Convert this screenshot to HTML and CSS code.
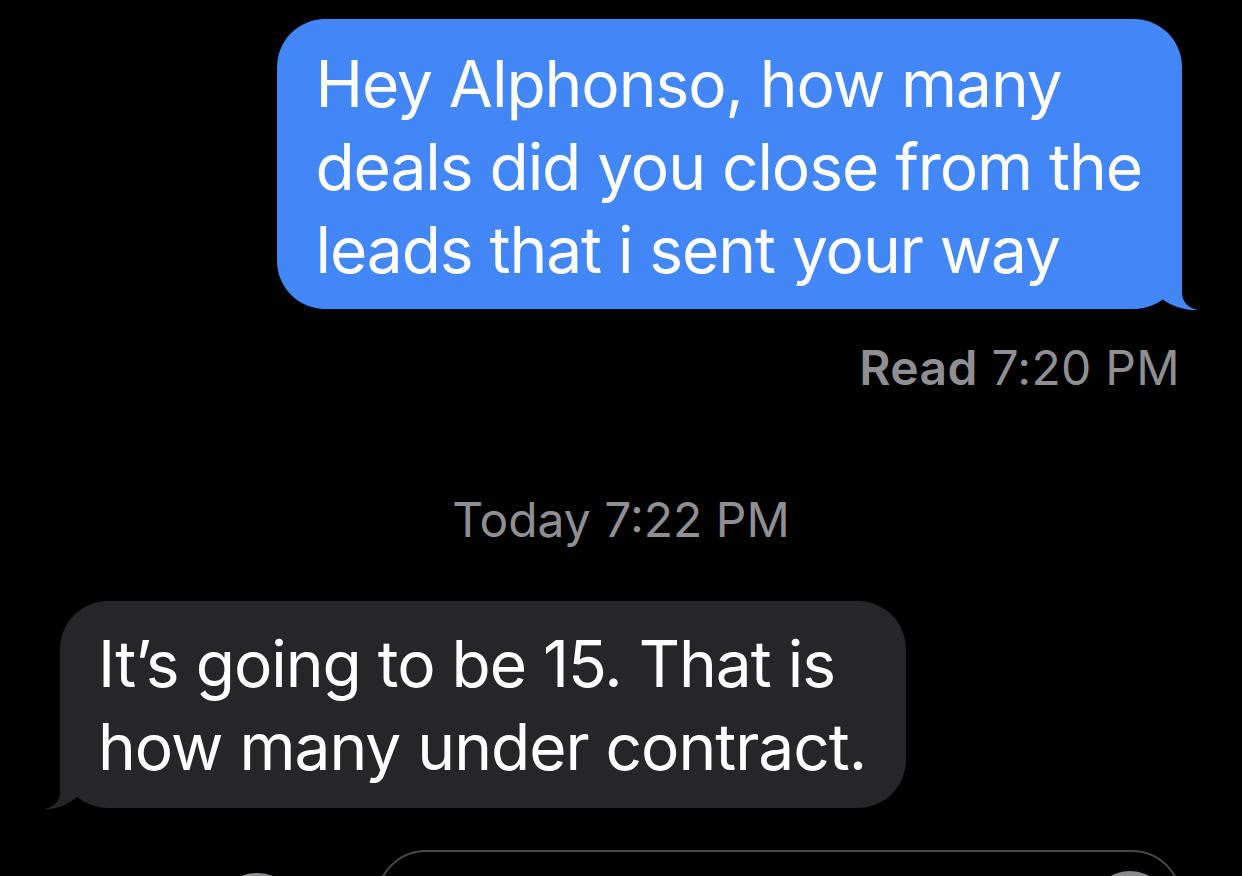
FILE: index.html
```html
<!DOCTYPE html>
<html lang="en">
<head>
<meta charset="utf-8">
<title>Messages</title>
<link rel="stylesheet" href="styles.css">
</head>
<body>
<main class="thread">
  <div class="bubble bubble-sent">Hey Alphonso, how many<br>deals did you close from the<br>leads that i sent your way<svg class="tail tail-sent" width="40" height="50" viewBox="0 0 40 50"><path d="M0,0 H24 V32 C24,42 30,48 40,50 C30,51 14,47 4,39 L0,41 Z"/></svg></div>
  <div class="receipt"><b>Read</b> 7:20 PM</div>
  <div class="stamp">Today 7:22 PM</div>
  <div class="bubble bubble-recv">It’s going to be 15. That is<br>how many under contract.<svg class="tail tail-recv" width="36" height="50" viewBox="0 0 36 50"><path d="M36,0 H16 V32 C16,42 11,48 0,50 C9,51 22,47 33,38 L36,40 Z"/></svg></div>
  <div class="composer">
    <div class="apps-button"></div>
    <div class="field">
      <div class="mic-button"></div>
    </div>
  </div>
</main>
</body>
</html>
```

FILE: styles.css
```css
html, body {
  margin: 0;
  padding: 0;
  background: #000;
  height: 876px;
  overflow: hidden;
}

body {
  font-family: Inter, "Noto Sans", sans-serif;
}

.thread {
  display: flex;
  flex-direction: column;
  padding: 19px 60px 0 60px;
}

.bubble {
  position: relative;
  font-size: 64px;
  line-height: 83px;
  color: #fff;
  border-radius: 48px;
  letter-spacing: -1px;
}

.bubble-sent {
  align-self: flex-end;
  background: #4287f5;
  padding: 23px 40px 18px 38px;
  letter-spacing: -1.05px;
}

.bubble-recv {
  align-self: flex-start;
  background: #262629;
  padding: 21px 40px 20px 38px;
  margin-top: 52px;
}

.tail {
  position: absolute;
  bottom: -1px;
}

.tail-sent {
  right: -16px;
  fill: #4287f5;
}

.tail-recv {
  left: -16px;
  fill: #262629;
}

.receipt,
.stamp {
  font-size: 48px;
  line-height: 58px;
  color: #8e8e93;
}

.receipt {
  align-self: flex-end;
  margin-top: 30px;
  margin-right: 2px;
  letter-spacing: 0.3px;
}

.receipt b {
  font-weight: 600;
}

.stamp {
  align-self: center;
  margin-top: 94px;
}

.composer {
  display: flex;
  align-items: flex-start;
  margin-top: 42px;
}

.apps-button {
  width: 90px;
  height: 90px;
  border-radius: 50%;
  background: #8e8e93;
  margin-left: 152px;
  margin-top: 23px;
}

.field {
  margin-left: auto;
  width: 806px;
  height: 100px;
  border: 2px solid #48484a;
  border-radius: 50px;
  display: flex;
  justify-content: flex-end;
  align-items: flex-start;
  padding: 19px 10px 0 0;
  box-sizing: border-box;
}

.mic-button {
  width: 80px;
  height: 80px;
  border-radius: 50%;
  background: #8a8a8e;
}
```
